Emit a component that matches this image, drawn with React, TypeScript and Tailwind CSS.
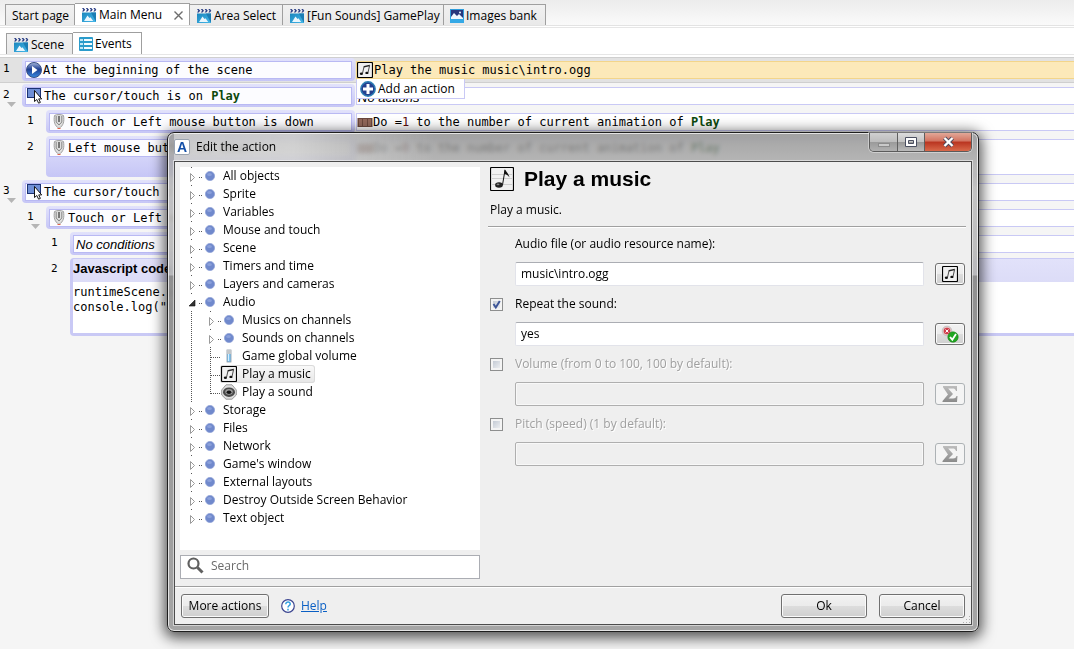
import React from "react";

const MONO = "font-['DejaVu_Sans_Mono','Liberation_Mono',monospace]";

type IconProps = { className?: string };

function SceneIcon() {
  return (
    <svg width="16" height="16" viewBox="0 0 16 16" className="shrink-0" aria-hidden="true">
      <defs>
        <linearGradient id="sceneBlue" x1="0" y1="0" x2="1" y2="1">
          <stop offset="0" stopColor="#1a86bd" />
          <stop offset="1" stopColor="#45b8ea" />
        </linearGradient>
      </defs>
      <path d="M1 5.500h14V15H1z" fill="url(#sceneBlue)" />
      <path d="M10 5.500h5V15z" fill="#1b7db4" />
      <path d="M1 1h1.700l1.500 1.800L2.700 4.600H1l1.300-1.800zM4.800 1h1.700L8 2.800 6.500 4.600H4.800l1.300-1.800zM8.600 1h1.700l1.500 1.800-1.500 1.800H8.600l1.300-1.800zM12.300 1H14l1.300 1.800L14 4.600h-1.700l1.300-1.800z" fill="#2b3f86" />
      <path d="M3 14l3.500-5.500L8.500 11l1-.7 2.700 3.700z" fill="#e9f6fd" />
    </svg>
  );
}

function EventsIcon() {
  return (
    <svg width="14" height="14" viewBox="0 0 14 14" className="shrink-0" aria-hidden="true">
      <rect width="14" height="14" rx="1" fill="#2a9bcb" />
      <path d="M1 2h3v2H1zM1 6h3v2H1zM1 10h3v2H1z" fill="#bfe6f6" />
      <path d="M5 2h8v2H5zM5 6h8v2H5zM5 10h8v2H5z" fill="#f4fbfe" />
    </svg>
  );
}

function ImageIcon() {
  return (
    <svg width="14" height="14" viewBox="0 0 14 14" className="shrink-0" aria-hidden="true">
      <rect width="14" height="14" fill="#2e9ddc" />
      <rect x="1" y="1" width="12" height="9" fill="#27377c" />
      <path d="M1 10V8l3-4 3 3 2-2 4 4v1z" fill="#eef7fd" />
      <circle cx="10" cy="3.500" r="1" fill="#eef7fd" />
      <path d="M0 10h14v4H0z" fill="#35a9e6" />
    </svg>
  );
}

function PlayDisc() {
  return (
    <svg width="16" height="16" viewBox="0 0 16 16" className="shrink-0" aria-hidden="true">
      <defs>
        <linearGradient id="disc" x1="0" y1="0" x2="0" y2="1">
          <stop offset="0" stopColor="#a8b8dc" />
          <stop offset=".45" stopColor="#1e3f92" />
          <stop offset="1" stopColor="#3a8ae0" />
        </linearGradient>
      </defs>
      <circle cx="8" cy="8" r="7.500" fill="url(#disc)" stroke="#3a4f85" />
      <path d="M6 4l5.500 4L6 12z" fill="#fff" />
    </svg>
  );
}

function CursorIcon() {
  return (
    <svg width="17" height="16" viewBox="0 0 17 16" className="shrink-0" aria-hidden="true">
      <rect x="1.500" y=".5" width="13" height="9" fill="#6f8fd6" stroke="#1c3273" />
      <path d="M8.500 2.500v11l2.300-2 1.800 3.700 1.800-.8-1.700-3.500h3z" fill="#fff" stroke="#000" strokeWidth=".9" />
    </svg>
  );
}

function MouseIcon() {
  return (
    <svg width="16" height="16" viewBox="0 0 16 16" className="shrink-0" aria-hidden="true">
      <path d="M3.500 1.500c-1 6 0 10 4.500 13 4.500-3 5.500-7 4.500-13-2-1.300-7-1.300-9 0z" fill="#dedede" stroke="#a0a0a0" />
      <path d="M5.200 2v6L8 11l2.800-3V2" fill="none" stroke="#888" />
      <rect x="7" y="2" width="2" height="6" fill="#777" />
      <path d="M6.500 14.500h3" stroke="#e0604a" strokeWidth="1.200" />
    </svg>
  );
}

function NotesIcon({ className = "" }: IconProps) {
  return (
    <svg width="16" height="16" viewBox="0 0 16 16" className={`shrink-0 ${className}`} aria-hidden="true">
      <rect x=".5" y=".5" width="15" height="15" rx="1" fill="#f0f0f0" stroke="#000" strokeWidth="1.200" />
      <path d="M5.500 11.300L7.200 4M11 10.500l1.600-7" fill="none" stroke="#222" strokeWidth=".8" />
      <path d="M7 4l5.800-1.200-.3 1.400L6.800 5.400z" fill="#222" />
      <ellipse cx="4.400" cy="11.700" rx="1.600" ry="1.200" fill="#111" />
      <ellipse cx="9.900" cy="10.900" rx="1.600" ry="1.200" fill="#111" />
    </svg>
  );
}

function BigNoteIcon() {
  return (
    <svg width="24" height="24" viewBox="0 0 24 24" className="shrink-0" aria-hidden="true">
      <rect x=".5" y=".5" width="23" height="23" rx="1" fill="#f1f1f1" stroke="#000" strokeWidth="1.200" />
      <path d="M2 7.500h20M2 11.500h20M2 17.500h20" stroke="#cfcfcf" />
      <path d="M12.500 18L15 3" stroke="#111" strokeWidth="1" />
      <path d="M14.900 2c.6 2.500 3.800 4 4.600 8.500-1.500-2.200-3.200-3.300-5.400-3.500z" fill="#111" />
      <ellipse cx="9" cy="18" rx="3.900" ry="2.700" fill="#222" />
      <ellipse cx="8" cy="17.300" rx="1.500" ry=".9" fill="#888" />
    </svg>
  );
}

function BricksIcon() {
  return (
    <svg width="16" height="16" viewBox="0 0 16 16" className="shrink-0" aria-hidden="true">
      <rect x=".5" y="4" width="15" height="9" fill="#6b483d" />
      <path d="M2 5h3v7H2zM6 5h4v7H6zM11 5h3v7h-3z" fill="#92685a" />
    </svg>
  );
}

function PlusIcon() {
  return (
    <svg width="16" height="16" viewBox="0 0 16 16" className="shrink-0" aria-hidden="true">
      <circle cx="8" cy="8" r="7.200" fill="#24408f" stroke="#2d7fb5" strokeWidth="1.400" />
      <path d="M6.500 3h3v3.500H13v3H9.500V13h-3V9.500H3v-3h3.500z" fill="#fff" />
    </svg>
  );
}

function DotIcon() {
  return (
    <svg width="10" height="10" viewBox="0 0 10 10" aria-hidden="true">
      <circle cx="5" cy="5" r="4.600" fill="#7089cc" stroke="#93a5d8" strokeWidth=".8" />
      <ellipse cx="4.500" cy="3.500" rx="2.400" ry="1.600" fill="#8ba0da" />
    </svg>
  );
}

function VolumeIcon() {
  return (
    <svg width="6" height="14" viewBox="0 0 6 14" aria-hidden="true">
      <rect x="1" y="1" width="4" height="12" fill="#7cc4f2" stroke="#8d9aa5" strokeWidth=".8" />
      <rect x="1" y="1" width="4" height="4" fill="#c3c7ca" />
      <path d="M2.500 5v7" stroke="#d5efff" />
    </svg>
  );
}

function SpeakerIcon() {
  return (
    <svg width="16" height="16" viewBox="0 0 16 16" aria-hidden="true">
      <path d="M5 .8h6L15.300 6v5L11 15.200H5L.7 11V6z" fill="#dedede" stroke="#9b9b9b" />
      <ellipse cx="8" cy="8.200" rx="6" ry="4.800" fill="#4a4a4a" />
      <ellipse cx="8" cy="7.800" rx="3.800" ry="2.900" fill="#9a9a9a" />
      <ellipse cx="8" cy="8.200" rx="2.400" ry="1.700" fill="#161616" />
    </svg>
  );
}

function YesNoIcon() {
  return (
    <svg width="18" height="18" viewBox="0 0 18 18" aria-hidden="true">
      <circle cx="6" cy="6" r="4.800" fill="#e6c4c4" stroke="#c4c4c4" />
      <circle cx="6" cy="6" r="3.300" fill="#cf3f4b" />
      <path d="M4.500 4.500l3 3M7.500 4.500l-3 3" stroke="#fff" strokeWidth="1" />
      <circle cx="12" cy="12" r="5.200" fill="#21a621" stroke="#178217" strokeWidth=".6" />
      <path d="M9 12l2.300 2.700L15 9" fill="none" stroke="#fff" strokeWidth="1.800" />
    </svg>
  );
}

function SigmaIcon() {
  return (
    <svg width="16" height="18" viewBox="0 0 16 18" aria-hidden="true">
      <defs>
        <linearGradient id="sigma" x1="0" y1="0" x2="0" y2="1">
          <stop offset="0" stopColor="#bdbdbd" />
          <stop offset="1" stopColor="#8a8a8a" />
        </linearGradient>
      </defs>
      <path d="M1 1h14v5h-1c-.6-2-1.500-2.500-3.500-2.500H6.200L11 9l-4.500 4.500H11c2 0 3-.8 3.500-2.500h1L15 17H.500v-1L6 9.500 1 2.200z" fill="url(#sigma)" />
    </svg>
  );
}

/* ---------- Editor tabs ---------- */

type TabProps = { label: string; icon?: React.ReactNode; width: string; active?: boolean; closable?: boolean };

function Tab({ label, icon, width, active, closable }: TabProps) {
  return (
    <button
      type="button"
      className={`flex items-center gap-[2px] whitespace-nowrap border-t border-r border-[#9f9f9f] px-[6px] pt-px first:border-l ${width} ${
        active ? "h-[22px] bg-white" : "h-[21px] bg-linear-to-b from-[#f1f1f1] to-[#e9e9e9]"
      }`}
    >
      {icon}
      <span>{label}</span>
      {closable && (
        <svg width="9" height="9" viewBox="0 0 9 9" className="ml-auto" aria-hidden="true">
          <path d="M.5.500l8 8M8.500.500l-8 8" stroke="#6d6d6d" strokeWidth="1.400" />
        </svg>
      )}
    </button>
  );
}

/* ---------- Events sheet ---------- */

function Num({ n, fold, depth }: { n: number; fold?: boolean; depth: string }) {
  return (
    <div className={`flex shrink-0 flex-col ${depth} ${MONO} pl-[3px] text-[11px] leading-[21px]`}>
      <span className="h-[18px]">{n}</span>
      {fold && (
        <svg width="9" height="5" viewBox="0 0 9 5" className="ml-1" aria-hidden="true">
          <path d="M0 0h9L4.500 5z" fill="#b5b5b5" />
        </svg>
      )}
    </div>
  );
}

const DEPTH = ["w-[22px]", "ml-6 w-[22px]", "ml-12 w-[22px]"];

type EventRowProps = {
  n: number;
  depth?: number;
  fold?: boolean;
  selected?: boolean;
  tall?: boolean;
  condition: React.ReactNode;
  children?: React.ReactNode;
};

function EventRow({ n, depth = 0, fold, selected, tall, condition, children }: EventRowProps) {
  return (
    <div
      className={`flex border-y ${tall ? "h-11" : "h-[26px]"} ${
        selected ? "border-[#cfcfcf] bg-[#e2e2e2]" : "border-transparent"
      }`}
    >
      <div className="flex w-[356px] shrink-0 pr-px">
        <Num n={n} fold={fold} depth={DEPTH[depth]} />
        <div className="mb-px flex-1 overflow-hidden rounded-[4px] bg-linear-to-b from-[#e2e2fb] to-[#c6c6f6] p-[3px]">
          <div className="flex h-[18px] items-center gap-px overflow-hidden border border-[#b9b9f3] bg-[#fcfcff] whitespace-nowrap">
            {condition}
          </div>
        </div>
      </div>
      <div className="relative my-[3px] flex-1 border-y border-l border-[#c9c9f5] bg-white whitespace-nowrap">
        {children}
      </div>
    </div>
  );
}

function MouseCondition({ children }: { children: React.ReactNode }) {
  return (
    <span className="flex items-center gap-px pl-px">
      <MouseIcon />
      {children}
    </span>
  );
}

function ObjectName({ children }: { children: React.ReactNode }) {
  return <b className="text-[#0d4a0d]">{children}</b>;
}

function EventsSheet() {
  return (
    <div className={`flex-1 bg-[#f5f5f5] ${MONO} text-[12px] leading-4`}>
      <EventRow n={1} selected condition={<><PlayDisc />At the beginning of the scene</>}>
        <div className="flex h-full items-center gap-px bg-[#fce9b9] shadow-[0_0_0_1px_#f3d58a]">
          <NotesIcon />
          Play the music music\intro.ogg
        </div>
        <button
          type="button"
          className="absolute top-[17px] -left-px z-10 flex h-[20px] w-[109px] items-center gap-[2px] border border-t-0 border-[#c9c9f5] bg-white pl-[3px] font-['Open_Sans','Noto_Sans',sans-serif] text-[12px]"
        >
          <PlusIcon />
          Add an action
        </button>
      </EventRow>
      <EventRow n={2} fold condition={<><CursorIcon />The cursor/touch is on&nbsp;<ObjectName>Play</ObjectName></>}>
        <i className="block px-px font-['Liberation_Sans',Arial,sans-serif] text-[13px] leading-[19px]">No actions</i>
      </EventRow>
      <EventRow n={1} depth={1} condition={<MouseCondition>Touch or Left mouse button is down</MouseCondition>}>
        <div className="flex h-4 items-center">
          <BricksIcon />
          <span>Do =<span className="text-[#5a0d0d]">1</span> to the number of current animation of <ObjectName>Play</ObjectName></span>
        </div>
      </EventRow>
      <EventRow n={2} depth={1} tall condition={<MouseCondition>Left mouse button is down</MouseCondition>}>
        <div className="flex h-4 items-center">
          <BricksIcon />
          <span>Do =<span className="text-[#5a0d0d]">0</span> to the number of current animation of <ObjectName>Play</ObjectName></span>
        </div>
      </EventRow>
      <EventRow n={3} fold condition={<><CursorIcon />The cursor/touch is on</>} />
      <EventRow n={1} depth={1} fold condition={<MouseCondition>Touch or Left mouse</MouseCondition>} />
      <EventRow
        n={1}
        depth={2}
        condition={<i className="pt-[2px] pl-[2px] font-['Liberation_Sans',Arial,sans-serif] text-[13px]">No conditions</i>}
      />
      <div className="flex pt-px">
        <Num n={2} depth="ml-12 w-[22px]" />
        <div className="flex-1 rounded-l-[4px] border-b-3 border-l-3 border-[#c9c9f5] bg-linear-to-b from-[#e2e2fa] to-[#d0d0f2]">
          <h3 className="h-6 overflow-hidden border-t border-[#c9c9f5] font-['Liberation_Sans',Arial,sans-serif] text-[13px] leading-5 font-bold">
            Javascript code
          </h3>
          <pre className={`h-[51px] bg-white pt-[3px] leading-[15px] ${MONO}`}>{'runtimeScene.s\nconsole.log("i'}</pre>
        </div>
      </div>
    </div>
  );
}

/* ---------- Instruction tree ---------- */

type Node = { label: string; kind?: "leaf" | "open"; icon?: React.ReactNode; selected?: boolean; last?: boolean };

const AUDIO: Node[] = [
  { label: "Musics on channels" },
  { label: "Sounds on channels" },
  { label: "Game global volume", kind: "leaf", icon: <VolumeIcon /> },
  { label: "Play a music", kind: "leaf", icon: <NotesIcon />, selected: true },
  { label: "Play a sound", kind: "leaf", icon: <SpeakerIcon />, last: true },
];

const BEFORE = ["All objects", "Sprite", "Variables", "Mouse and touch", "Scene", "Timers and time", "Layers and cameras"];
const AFTER = ["Storage", "Files", "Network", "Game's window", "External layouts", "Destroy Outside Screen Behavior", "Text object"];

function TreeRow({ node }: { node: Node }) {
  return (
    <li className="flex h-[18px]">
      <svg width="14" height="18" viewBox="0 0 14 18" className="shrink-0 overflow-visible" aria-hidden="true">
        {node.kind === "leaf" ? (
          <>
            <path d={node.last ? "M4.500 0v11" : "M4.500 0v18"} stroke="#555" strokeDasharray="1 1" />
            <path d="M5 10.500h10" stroke="#555" strokeDasharray="1 1" />
          </>
        ) : (
          <>
            {node.kind === "open" ? (
              <path d="M8 7v6H2z" fill="#333" stroke="#111" strokeWidth=".6" />
            ) : (
              <path d="M3.500 6.500v8l4-4z" fill="#fff" stroke="#9a9a9a" />
            )}
            <path d="M12 10.500h1M14 10.500h1M4 0.500h1" stroke="#555" />
          </>
        )}
      </svg>
      <button
        type="button"
        className={`flex items-center gap-1 pr-1 whitespace-nowrap ${
          node.selected ? "rounded-[3px] bg-linear-to-b from-[#fafafa] to-[#e6e6e6] shadow-[inset_0_0_0_1px_#dadada]" : ""
        }`}
      >
        <span className="flex w-[18px] justify-center">{node.icon ?? <DotIcon />}</span>
        {node.label}
      </button>
    </li>
  );
}

function InstructionTree() {
  return (
    <ul className="h-[383px] bg-white pl-[7px]">
      {BEFORE.map((label) => (
        <TreeRow key={label} node={{ label }} />
      ))}
      <TreeRow node={{ label: "Audio", kind: "open" }} />
      <li className="flex">
        <svg width="19" height="90" viewBox="0 0 19 90" className="shrink-0" aria-hidden="true">
          <path d="M4.500 0v90" stroke="#555" strokeDasharray="1 1" />
        </svg>
        <ul>
          {AUDIO.map((node) => (
            <TreeRow key={node.label} node={node} />
          ))}
        </ul>
      </li>
      {AFTER.map((label) => (
        <TreeRow key={label} node={{ label }} />
      ))}
    </ul>
  );
}

/* ---------- Parameters form ---------- */

type ParamProps = {
  id: string;
  label: string;
  value?: string;
  optional?: boolean;
  enabled?: boolean;
  icon: React.ReactNode;
  action: string;
};

function Param({ id, label, value = "", optional, enabled = true, icon, action }: ParamProps) {
  return (
    <div className="grid grid-cols-[25px_1fr_30px] gap-y-[9px]">
      <div className="flex items-center">
        {optional && (
          <span className="relative flex">
            <input
              type="checkbox"
              defaultChecked={enabled}
              aria-label={`Use ${label}`}
              className="size-[13px] appearance-none border border-[#8e8f8f] bg-linear-to-br from-[#b9c1cd] to-[#f8f8f8] shadow-[inset_0_0_0_2px_#f4f4f4]"
            />
            {enabled && (
              <svg width="13" height="13" viewBox="0 0 13 13" className="pointer-events-none absolute inset-0" aria-hidden="true">
                <path d="M3.500 6l2.300 3.500L9.800 3" fill="none" stroke="#3d5598" strokeWidth="2" />
              </svg>
            )}
          </span>
        )}
      </div>
      <label
        htmlFor={id}
        className={`col-span-2 h-[18px] leading-[18px] ${enabled ? "" : "text-[#a0a0a0] [text-shadow:1px_1px_0_#fff]"}`}
      >
        {label}
      </label>
      <input
        id={id}
        type="text"
        defaultValue={value}
        disabled={!enabled}
        className={`col-start-2 mr-[11px] h-6 min-w-0 rounded-[2px] border px-[5px] pb-px ${
          enabled ? "border-[#e2e3ea] border-t-[#abadb3] bg-white" : "border-[#afafaf] bg-[#efefef] shadow-[inset_0_0_0_1px_#f8f8f8]"
        }`}
      />
      <button
        type="button"
        aria-label={action}
        disabled={!enabled}
        className={`flex h-[22px] items-center justify-center self-center rounded-[3px] border ${
          enabled
            ? "border-[#707070] bg-[linear-gradient(#f2f2f2,#ebebeb_50%,#dddddd_50%,#cfcfcf)] shadow-[inset_0_0_0_1px_#fafafa]"
            : "border-[#adb2b5] bg-[#f4f4f4]"
        }`}
      >
        {icon}
      </button>
    </div>
  );
}

function PushButton({ children, width }: { children: React.ReactNode; width: string }) {
  return (
    <button
      type="button"
      className={`h-6 rounded-[3px] border border-[#707070] bg-[linear-gradient(#f2f2f2,#ebebeb_50%,#dddddd_50%,#cfcfcf)] pb-px shadow-[inset_0_0_0_1px_#fafafa] ${width}`}
    >
      {children}
    </button>
  );
}

function WindowButtons() {
  return (
    <div className="flex h-[19px] overflow-hidden rounded-b-[5px] border border-t-0 border-[#5b5b5b] shadow-[0_0_0_1px_#ffffff66]">
      <button type="button" aria-label="Minimize" className="flex w-7 items-center justify-center border-r border-[#5f5f5f] bg-[linear-gradient(#d0d0d0,#bcbcbc_50%,#9a9a9a_50%,#b0b0b0)]">
        <svg width="12" height="12" viewBox="0 0 12 12" aria-hidden="true">
          <rect x=".5" y="7.500" width="11" height="3" fill="#c9c9c9" stroke="#8b8b8b" />
        </svg>
      </button>
      <button type="button" aria-label="Maximize" className="flex w-[27px] items-center justify-center border-r border-[#5f5f5f] bg-[linear-gradient(#dcdcdc,#c2c2c2_50%,#979797_50%,#bbbbbb)]">
        <svg width="12" height="10" viewBox="0 0 12 10" aria-hidden="true">
          <path d="M.5.500h11v9H.500zM3.500 3.500h5v3h-5z" fill="#fff" fillRule="evenodd" stroke="#4b4f60" />
        </svg>
      </button>
      <button type="button" aria-label="Close" className="flex w-[46px] items-center justify-center bg-[linear-gradient(#e2a898,#d27360_45%,#b93420_50%,#d9694a)]">
        <svg width="13" height="12" viewBox="0 0 13 12" aria-hidden="true">
          <path d="M2.500 2l8 8M10.500 2l-8 8" stroke="#4e4a5e" strokeWidth="4.200" />
          <path d="M2.500 2l8 8M10.500 2l-8 8" stroke="#fff" strokeWidth="2.400" />
        </svg>
      </button>
    </div>
  );
}

function ActionDialog() {
  return (
    <section
      role="dialog"
      aria-labelledby="dialog-title"
      className="absolute top-[132px] right-[95px] left-[167px] z-20 rounded-[7px] border border-[#1e1e1e] bg-[linear-gradient(#8c8c8ccc,#a4a4a4cc_30px,#bdbdbde6_60px,#b4b4b4e6_142px,#8a8a8af2_143px,#a0a0a0f2)] px-[6px] pb-[6px] shadow-[inset_0_0_0_1px_#ffffffb3,0_3px_14px_3px_#000000a8] backdrop-blur-[2px]"
    >
      <header className="flex h-7 items-start bg-[linear-gradient(90deg,#ffffff66,#ffffff73_120px,#ffffff33_185px,#ffffff00_260px)]">
        <span className="mt-[6px] flex size-4 items-center justify-center rounded-[2px] border border-[#9aa3b0] bg-white font-['Liberation_Sans',Arial,sans-serif] text-[14px] leading-none font-bold text-[#1550a8]">
          A
        </span>
        <h1 id="dialog-title" className="mt-[6px] ml-[6px] leading-4">Edit the action</h1>
        <div className="ml-auto">
          <WindowButtons />
        </div>
      </header>
      <div className="border border-[#4c4c4c] bg-[#efefef] shadow-[0_0_0_1px_#ffffff80]">
        <div className="flex gap-2 p-[5px] pb-[7px]">
          <div className="flex w-[300px] shrink-0 flex-col gap-[5px]">
            <InstructionTree />
            <label className="flex h-6 items-center gap-[7px] border border-[#abadb3] bg-white pb-[3px] pl-[6px]">
              <svg width="17" height="17" viewBox="0 0 17 17" className="shrink-0" aria-hidden="true">
                <circle cx="6.500" cy="6.500" r="5" fill="none" stroke="#606060" strokeWidth="2.200" />
                <path d="M10.500 10.500l5 5" stroke="#606060" strokeWidth="3" />
              </svg>
              <input type="search" aria-label="Search" placeholder="Search" className="min-w-0 flex-1 bg-transparent placeholder:text-[#6a6a6a] focus:outline-none" />
            </label>
          </div>
          <div className="min-w-0 flex-1">
            <div className="flex items-center gap-[10px] pl-[2px]">
              <BigNoteIcon />
              <h2 className="font-['Liberation_Sans',Arial,sans-serif] text-[21px] leading-6 font-bold">Play a music</h2>
            </div>
            <p className="mt-[10px] pl-[2px] leading-[18px]">Play a music.</p>
            <hr className="mt-[7px] border-t border-b border-t-[#a0a0a0] border-b-white" />
            <div className="mt-[7px] flex flex-col gap-[9px] pr-[1px] pl-[2px]">
              <Param id="file" label="Audio file (or audio resource name):" value="music\intro.ogg" icon={<NotesIcon />} action="Choose an audio resource" />
              <Param id="repeat" label="Repeat the sound:" value="yes" optional icon={<YesNoIcon />} action="Choose yes or no" />
              <Param id="volume" label="Volume (from 0 to 100, 100 by default):" optional enabled={false} icon={<SigmaIcon />} action="Edit the volume expression" />
              <Param id="pitch" label="Pitch (speed) (1 by default):" optional enabled={false} icon={<SigmaIcon />} action="Edit the pitch expression" />
            </div>
          </div>
        </div>
        <footer className="relative flex items-center gap-3 border-t border-[#a0a0a0] px-[6px] pt-[7px] pb-[6px] shadow-[inset_0_1px_0_#fff]">
          <PushButton width="w-[88px]">More actions</PushButton>
          <a href="#help" className="flex items-center gap-[6px] text-[#0a5fc4] underline">
            <svg width="14" height="14" viewBox="0 0 14 14" aria-hidden="true">
              <circle cx="7" cy="7" r="6.300" fill="#fff" stroke="#3b4590" strokeWidth="1.200" />
              <path d="M4.800 5.200c0-3 4.600-2.800 4.400-.1C9.100 6.500 7 6.700 7 8.600M7 9.800v1.600" fill="none" stroke="#2f9fe0" strokeWidth="1.500" />
            </svg>
            Help
          </a>
          <div className="ml-auto flex gap-3">
            <PushButton width="w-[86px]">Ok</PushButton>
            <PushButton width="w-[86px]">Cancel</PushButton>
          </div>
          <svg width="8" height="8" viewBox="0 0 8 8" className="absolute right-0 bottom-0" aria-hidden="true">
            <path d="M6 0h1v1H6zM3 3h1v1H3zM6 3h1v1H6zM0 6h1v1H0zM3 6h1v1H3zM6 6h1v1H6z" fill="#b0b0b0" />
          </svg>
        </footer>
      </div>
    </section>
  );
}

export default function App() {
  return (
    <main className="relative flex min-h-screen flex-col overflow-hidden bg-white font-['Open_Sans','Noto_Sans',sans-serif] text-[12px] leading-4 text-black">
      <nav aria-label="Documents" className="flex h-[26px] items-end border-b border-[#e3e3e3] bg-linear-to-b from-[#ececec] to-[#fafafa] pl-[5px]">
        <Tab label="Start page" width="w-[70px]" />
        <Tab label="Main Menu" width="w-[115px]" icon={<SceneIcon />} active closable />
        <Tab label="Area Select" width="w-[93px]" icon={<SceneIcon />} />
        <Tab label="[Fun Sounds] GamePlay" width="w-[161px]" icon={<SceneIcon />} />
        <Tab label="Images bank" width="w-[102px]" icon={<ImageIcon />} />
      </nav>
      <nav aria-label="Editors" className="mt-px mb-[2px] flex h-[28px] items-end border-y border-[#e6e6e6] pl-[6px]">
        <Tab label="Scene" width="w-[67px]" icon={<SceneIcon />} />
        <Tab label="Events" width="w-[69px]" icon={<EventsIcon />} active />
      </nav>
      <EventsSheet />
      <ActionDialog />
    </main>
  );
}
